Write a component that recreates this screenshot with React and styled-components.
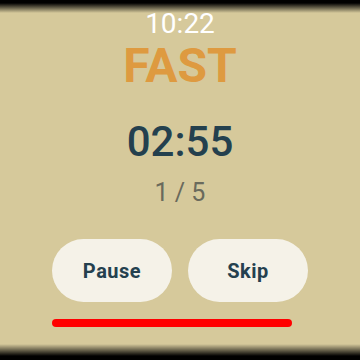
import styled, { createGlobalStyle } from "styled-components"

const GlobalStyle = createGlobalStyle`
  html, body {
    margin: 0;
    padding: 0;
  }
  body {
    font-family: Roboto, "Liberation Sans", sans-serif;
  }
`

const Screen = styled.div`
  width: 360px;
  height: 360px;
  box-sizing: border-box;
  padding-top: 10.3px;
  display: flex;
  flex-direction: column;
  align-items: center;
  background:
    linear-gradient(to bottom, #000 0px, #000 3px, rgba(0, 0, 0, 0) 13px),
    linear-gradient(to top, #000 0px, #000 4px, rgba(0, 0, 0, 0) 16px),
    #d6c99b;
  overflow: hidden;
`

const Clock = styled.div`
  font-size: 28px;
  line-height: 28px;
  color: #ffffff;
`

const Phase = styled.div`
  margin-top: 3.4px;
  font-size: 48px;
  line-height: 48px;
  font-weight: 700;
  color: #de9a40;
`

const Timer = styled.div`
  margin-top: 31.8px;
  font-size: 42px;
  line-height: 42px;
  font-weight: 500;
  color: #24404e;
`

const Round = styled.div`
  margin-top: 17px;
  font-size: 25px;
  line-height: 25px;
  color: #6a6a5c;
`

const Controls = styled.div`
  margin-top: 34px;
  width: 256px;
  display: flex;
  flex-direction: column;
  gap: 17px;
`

const ButtonRow = styled.div`
  display: flex;
  gap: 16px;
`

const Button = styled.button`
  width: 120px;
  height: 63px;
  border: none;
  border-radius: 32px;
  background: #f5f2e8;
  color: #24404e;
  font-family: Roboto, "Liberation Sans", sans-serif;
  font-size: 20px;
  font-weight: 700;
  letter-spacing: 0.5px;
  padding: 0;
  cursor: pointer;
`

const Progress = styled.div`
  width: 240px;
  height: 8px;
  border-radius: 4px;
  background: #ff0000;
`

const App = () => {
  return (
    <>
      <GlobalStyle />
      <Screen>
        <Clock>10:22</Clock>
        <Phase>FAST</Phase>
        <Timer>02:55</Timer>
        <Round>1 / 5</Round>
        <Controls>
          <ButtonRow>
            <Button>Pause</Button>
            <Button>Skip</Button>
          </ButtonRow>
          <Progress />
        </Controls>
      </Screen>
    </>
  )
}

export default App
